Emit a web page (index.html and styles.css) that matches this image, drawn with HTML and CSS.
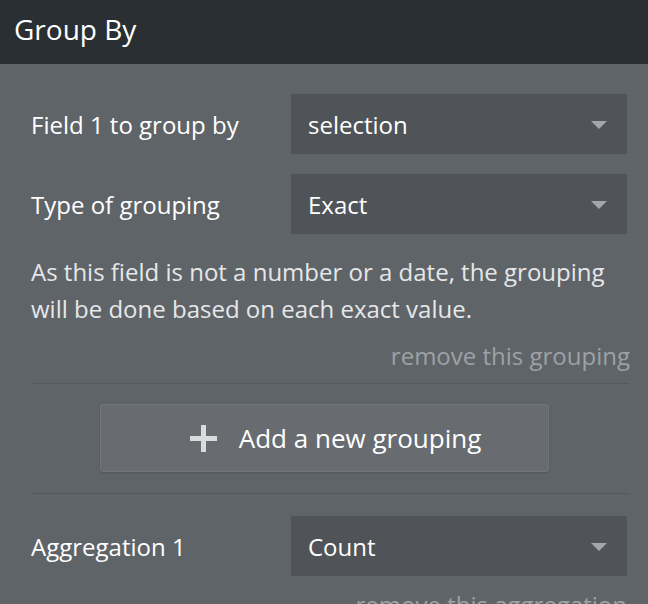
FILE: index.html
```html
<!DOCTYPE html>
<html>
<head>
<meta charset="utf-8">
<link rel="stylesheet" href="styles.css">
</head>
<body>
<div class="header">Group By</div>
<div class="content">
  <div class="row">
    <div class="label">Field 1 to group by</div>
    <div class="select"><span>selection</span><span class="caret"></span></div>
  </div>
  <div class="row row-gap">
    <div class="label">Type of grouping</div>
    <div class="select"><span>Exact</span><span class="caret"></span></div>
  </div>
  <p class="desc">As this field is not a number or a date, the grouping will be done based on each exact value.</p>
  <div class="remove">remove this grouping</div>
  <div class="divider"></div>
  <div class="btn-wrap">
    <div class="btn">
      <svg class="plus" width="27" height="27" viewBox="0 0 27 27"><rect x="11" y="0" width="5" height="27" fill="#d9dbdc"/><rect x="0" y="11" width="27" height="5" fill="#d9dbdc"/></svg>
      <span>Add a new grouping</span>
    </div>
  </div>
  <div class="divider divider2"></div>
  <div class="row row-agg">
    <div class="label">Aggregation 1</div>
    <div class="select"><span>Count</span><span class="caret"></span></div>
  </div>
  <div class="remove remove-agg">remove this aggregation</div>
</div>
</body>
</html>
```

FILE: styles.css
```css
html, body {
  margin: 0;
  padding: 0;
  background: #5f6468;
  font-family: "Open Sans", "Noto Sans", sans-serif;
  overflow: hidden;
  height: 604px;
}
.header {
  height: 64px;
  background: #292f32;
  color: #ffffff;
  font-size: 28px;
  display: flex;
  align-items: center;
  padding-left: 14px;
  padding-bottom: 6px;
  box-sizing: border-box;
}
.content {
  padding: 30px 21px 0 31px;
}
.row {
  display: flex;
  align-items: center;
  justify-content: space-between;
  height: 60px;
}
.row-gap {
  margin-top: 20px;
}
.label {
  color: #ffffff;
  font-size: 24px;
  padding-bottom: 0;
}
.select {
  width: 336px;
  height: 60px;
  box-sizing: border-box;
  background: #505458;
  display: flex;
  align-items: center;
  justify-content: space-between;
  padding: 0 20px 0 17px;
  color: #ffffff;
  font-size: 24px;
}
.caret {
  width: 0;
  height: 0;
  border-left: 8.5px solid transparent;
  border-right: 8.5px solid transparent;
  border-top: 8px solid #a4a7aa;
  margin-top: 1px;
}
.desc {
  margin: 19px 0 0 0;
  color: #e6e7e8;
  font-size: 24px;
  line-height: 37px;
}
.remove {
  text-align: right;
  color: #9ea1a4;
  font-size: 24px;
  line-height: 30px;
  margin-top: 14px;
  margin-right: -3px;
}
.divider {
  height: 1px;
  background: #55595d;
  margin: 12px -2px 0 1px;
}
.btn-wrap {
  display: flex;
  justify-content: center;
  margin: 20px 0 0 -10px;
}
.btn {
  width: 449px;
  height: 68px;
  box-sizing: border-box;
  background: #686c70;
  border: 1px solid #72767a;
  border-radius: 3px;
  box-shadow: 0 1px 2px rgba(0,0,0,0.15);
  display: flex;
  align-items: center;
  justify-content: center;
  gap: 22px;
  color: #ffffff;
  font-size: 26px;
  padding-left: 23px;
  padding-right: 0;
}
.plus {
  display: block;
}
.divider2 {
  margin-top: 21px;
}
.row-agg {
  margin-top: 22px;
}
.remove-agg {
  margin-top: 14px;
  margin-right: 0;
}
```
